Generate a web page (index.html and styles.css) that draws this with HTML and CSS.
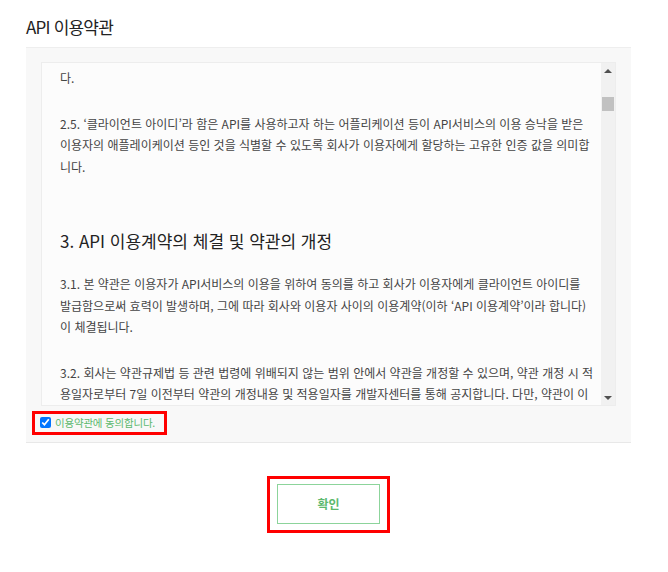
FILE: index.html
```html
<!DOCTYPE html>
<html lang="ko">
<head>
    <meta charset="UTF-8">
    <meta name="viewport" content="width=device-width, initial-scale=1.0">
    <title>API 이용약관</title>
    <link rel="stylesheet" href="styles.css">
</head>
<body>
    <div class="page">
        <h2 class="title">API 이용약관</h2>

        <div class="panel">
            <div class="terms">
                <div class="terms-body">
                    <p class="cut">2.4. ‘API서비스’라 함은 회사가 개발자센터를 통해 이용자에게 제공하는 오픈 API 및 관련 제반 서비스를 의미합니<br>다.</p>
                    <p>2.5. ‘클라이언트 아이디’라 함은 API를 사용하고자 하는 어플리케이션 등이 API서비스의 이용 승낙을 받은<br>이용자의 애플레이케이션 등인 것을 식별할 수 있도록 회사가 이용자에게 할당하는 고유한 인증 값을 의미합<br>니다.</p>
                    <h3>3. API 이용계약의 체결 및 약관의 개정</h3>
                    <p>3.1. 본 약관은 이용자가 API서비스의 이용을 위하여 동의를 하고 회사가 이용자에게 클라이언트 아이디를<br>발급함으로써 효력이 발생하며, 그에 따라 회사와 이용자 사이의 이용계약(이하 ‘API 이용계약’이라 합니다)<br>이 체결됩니다.</p>
                    <p>3.2. 회사는 약관규제법 등 관련 법령에 위배되지 않는 범위 안에서 약관을 개정할 수 있으며, 약관 개정 시 적<br>용일자로부터 7일 이전부터 약관의 개정내용 및 적용일자를 개발자센터를 통해 공지합니다. 다만, 약관이 이</p>
                </div>
                <!-- scrollbar drawn by hand so the thumb sits where it should -->
                <div class="scrollbar">
                    <div class="sb-btn"><span class="arrow-up"></span></div>
                    <div class="sb-track"><div class="sb-thumb"></div></div>
                    <div class="sb-btn"><span class="arrow-down"></span></div>
                </div>
            </div>

            <div class="agree-row">
                <label class="agree mark">
                    <input type="checkbox" checked>
                    <span>이용약관에 동의합니다.</span>
                </label>
            </div>
        </div>

        <div class="actions">
            <div class="mark btn-wrap">
                <button class="btn-ok">확인</button>
            </div>
        </div>
    </div>
</body>
</html>
```

FILE: styles.css
```css
body {
    margin: 0;
    background-color: #fff;
    font-family: "Noto Sans CJK KR", "Noto Sans", sans-serif;
    color: #444;
}
.page {
    width: 605px;
    margin-left: 26px;
}
.title {
    margin: 14px 0 7px;
    font-size: 17px;
    line-height: 26px;
    font-weight: normal;
    color: #222;
    letter-spacing: -0.8px;
}
.panel {
    background-color: #f8f8f8;
    border-top: 1px solid #eee;
    border-bottom: 1px solid #e8e8e8;
    padding: 14px 15px 0 15px;
}
.terms {
    display: flex;
    height: 342px;
    border: 1px solid #ededed;
    background-color: #fcfcfc;
}
.terms-body {
    flex: 1;
    overflow: hidden;
    padding: 0 18px;
}
.terms-body p {
    margin: 0 0 24px;
    font-size: 12px;
    line-height: 21.5px;
    white-space: nowrap;
    color: #444;
}
.terms-body p.cut {
    margin-top: -17.25px;
}
.terms-body h3 {
    margin: 51px 0 19px;
    font-size: 17px;
    line-height: 26px;
    font-weight: normal;
    color: #222;
}
.scrollbar {
    width: 14px;
    display: flex;
    flex-direction: column;
    background-color: #f1f1f1;
}
.sb-btn {
    height: 15px;
    display: flex;
    align-items: center;
    justify-content: center;
}
.arrow-up {
    border-left: 4px solid transparent;
    border-right: 4px solid transparent;
    border-bottom: 4px solid #505050;
}
.arrow-down {
    border-left: 4px solid transparent;
    border-right: 4px solid transparent;
    border-top: 4px solid #505050;
}
.sb-track {
    flex: 1;
}
.sb-thumb {
    margin: 19px 1px 0;
    height: 14px;
    background-color: #c1c1c1;
}
.agree-row {
    padding: 3px 0 7px;
    margin-left: -9px;
}
/* red highlight boxes */
.mark {
    border: 3px solid #f00;
}
.agree {
    display: inline-flex;
    align-items: center;
    gap: 4px;
    padding: 1px 9px 1px 5px;
    font-size: 10.5px;
    line-height: 16px;
    letter-spacing: -0.2px;
    color: #5cb96e;
}
.agree input {
    width: 11px;
    height: 11px;
    margin: 0;
}
.actions {
    display: flex;
    justify-content: center;
    margin-top: 33px;
}
.btn-wrap {
    padding: 5px 7px 6px;
}
.btn-ok {
    width: 103px;
    height: 40px;
    border: 1px solid #8cd49b;
    background-color: #fff;
    color: #5cb96e;
    font-family: "Noto Sans CJK KR", sans-serif;
    font-size: 12px;
    font-weight: bold;
}
```
